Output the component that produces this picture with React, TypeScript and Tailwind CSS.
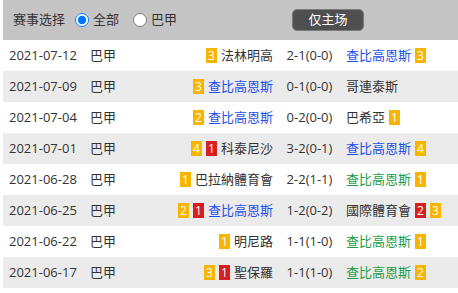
import React from "react";

type B = { c: "y" | "r"; n: number };
type Row = {
  date: string;
  home: string;
  homeColor: string;
  homeBadges: B[];
  score: string;
  away: string;
  awayColor: string;
  awayBadges: B[];
};

const DARK = "text-[#333333]";
const BLUE = "text-[#1f4fe8]";
const GREEN = "text-[#1c9c44]";

const rows: Row[] = [
  { date: "2021-07-12", home: "法林明高", homeColor: DARK, homeBadges: [{ c: "y", n: 3 }], score: "2-1(0-0)", away: "查比高恩斯", awayColor: BLUE, awayBadges: [{ c: "y", n: 3 }] },
  { date: "2021-07-09", home: "查比高恩斯", homeColor: BLUE, homeBadges: [{ c: "y", n: 3 }], score: "0-1(0-0)", away: "哥連泰斯", awayColor: DARK, awayBadges: [] },
  { date: "2021-07-04", home: "查比高恩斯", homeColor: BLUE, homeBadges: [{ c: "y", n: 2 }], score: "0-2(0-0)", away: "巴希亞", awayColor: DARK, awayBadges: [{ c: "y", n: 1 }] },
  { date: "2021-07-01", home: "科泰尼沙", homeColor: DARK, homeBadges: [{ c: "y", n: 4 }, { c: "r", n: 1 }], score: "3-2(0-1)", away: "查比高恩斯", awayColor: BLUE, awayBadges: [{ c: "y", n: 4 }] },
  { date: "2021-06-28", home: "巴拉納體育會", homeColor: DARK, homeBadges: [{ c: "y", n: 1 }], score: "2-2(1-1)", away: "查比高恩斯", awayColor: GREEN, awayBadges: [{ c: "y", n: 1 }] },
  { date: "2021-06-25", home: "查比高恩斯", homeColor: BLUE, homeBadges: [{ c: "y", n: 2 }, { c: "r", n: 1 }], score: "1-2(0-2)", away: "國際體育會", awayColor: DARK, awayBadges: [{ c: "r", n: 2 }, { c: "y", n: 3 }] },
  { date: "2021-06-22", home: "明尼路", homeColor: DARK, homeBadges: [{ c: "y", n: 1 }], score: "1-1(1-0)", away: "查比高恩斯", awayColor: GREEN, awayBadges: [{ c: "y", n: 1 }] },
  { date: "2021-06-17", home: "聖保羅", homeColor: DARK, homeBadges: [{ c: "y", n: 3 }, { c: "r", n: 1 }], score: "1-1(1-0)", away: "查比高恩斯", awayColor: GREEN, awayBadges: [{ c: "y", n: 2 }] },
];

function Badge({ b }: { b: B }) {
  return (
    <span
      className={
        "inline-flex h-[15px] w-[11px] items-center justify-center text-[12px] leading-none text-white " +
        (b.c === "y" ? "bg-[#f7b500]" : "bg-[#d71f22]")
      }
    >
      {b.n}
    </span>
  );
}

export default function App() {
  return (
    <div className="w-[458px] h-[293px] bg-white pl-[3px] font-['Open_Sans','Noto_Sans_CJK_SC',sans-serif] text-[13px] text-[#333333]">
      <div className="flex h-[40px] items-center bg-[#c4c4c4] pl-[10px]">
        <span>赛事选择</span>
        <label className="ml-[10px] flex items-center">
          <input type="radio" name="m" defaultChecked className="m-0 h-[14px] w-[14px]" />
          <span className="ml-[4px]">全部</span>
        </label>
        <label className="ml-[14px] flex items-center">
          <input type="radio" name="m" className="m-0 h-[14px] w-[14px]" />
          <span className="ml-[4px]">巴甲</span>
        </label>
        <button className="ml-[115px] flex h-[22px] w-[72px] items-center justify-center rounded-[5px] border border-[#7a7a7a] bg-[#4f4f4f] text-[13px] text-white">
          仅主场
        </button>
      </div>
      {rows.map((r, i) => (
        <div
          key={r.date}
          className={"flex h-[31px] items-center " + (i % 2 === 1 ? "bg-[#ebebeb]" : "bg-white")}
        >
          <div className="w-[87px] pl-[6px]">{r.date}</div>
          <div className="w-[40px]">巴甲</div>
          <div className="flex w-[143px] items-center justify-end gap-[4px]">
            {r.homeBadges.map((b, j) => (
              <Badge key={j} b={b} />
            ))}
            <span className={r.homeColor}>{r.home}</span>
          </div>
          <div className="w-[73px] text-center">{r.score}</div>
          <div className="flex items-center gap-[4px]">
            <span className={r.awayColor}>{r.away}</span>
            {r.awayBadges.map((b, j) => (
              <Badge key={j} b={b} />
            ))}
          </div>
        </div>
      ))}
    </div>
  );
}
